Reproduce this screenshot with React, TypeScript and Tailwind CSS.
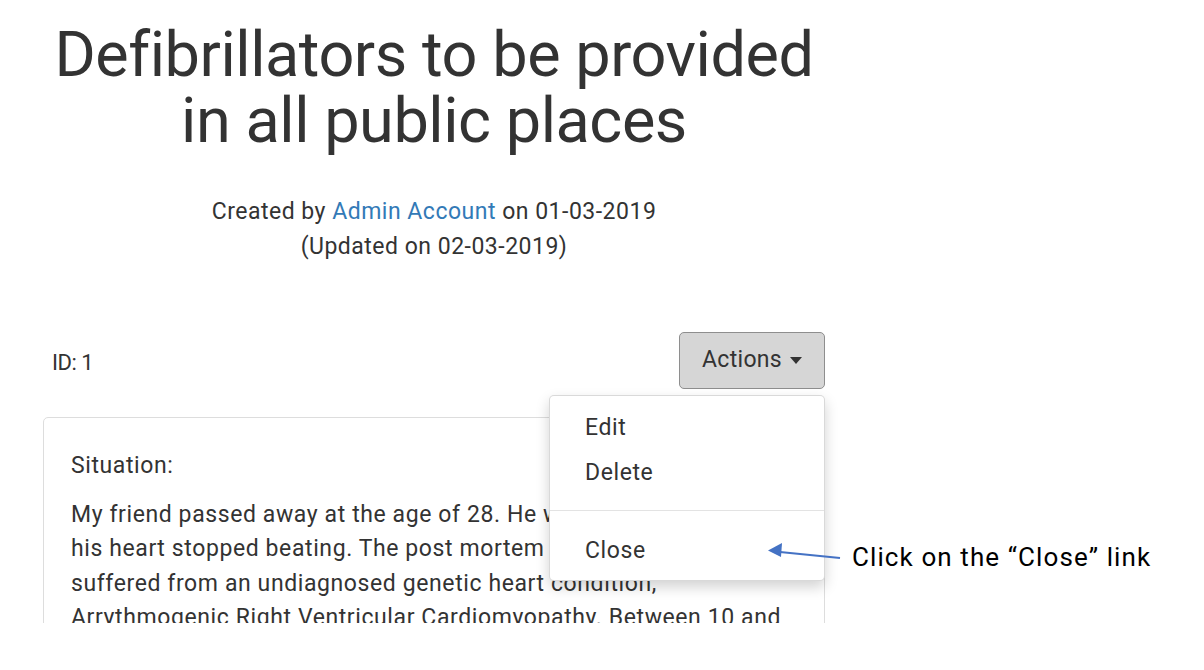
export default function App() {
  return (
    <div className="relative w-[1204px] h-[670px] bg-white text-[#333] font-['Roboto',sans-serif]">
      <div className="h-[623px] overflow-hidden">
        <div className="ml-[43px] w-[782px]">
          <h1 className="pt-[22px] text-center text-[63px] leading-[66px] font-normal tracking-[-0.45px]">
            Defibrillators to be provided
            <br />
            in all public places
          </h1>

          <div className="mt-[40px] text-center text-[23px] leading-[35px] tracking-[0.5px]">
            <div>
              Created by <a className="text-[#337ab7]">Admin Account</a> on 01-03-2019
            </div>
            <div>(Updated on 02-03-2019)</div>
          </div>

          <div className="relative mt-[68px] flex items-center justify-between">
            <div className="pl-[9px] pt-[4px] text-[22px] leading-[35px] tracking-[-0.5px]">ID: 1</div>
            <button className="flex h-[57px] w-[146px] items-center justify-center gap-[8px] rounded-[5px] border border-[#8e8e8e] bg-[#d6d6d6] text-[23px] tracking-[0.3px] text-[#333]">
              Actions
              <svg width="12" height="7" viewBox="0 0 12 7">
                <path d="M0 0h12L6 7z" fill="#333" />
              </svg>
            </button>

            <div className="absolute right-0 top-[63px] z-10 w-[276px] rounded-[5px] border border-black/15 bg-white pt-[9px] pb-[7px] shadow-[0_6px_14px_rgba(0,0,0,0.18)] text-[23px] tracking-[0.6px]">
              <div className="h-[45px] pl-[35px] leading-[45px]">Edit</div>
              <div className="h-[45px] pl-[35px] leading-[45px]">Delete</div>
              <div className="mt-[15px] mb-[17px] h-px bg-[#e3e3e3]" />
              <div className="h-[45px] pl-[35px] leading-[45px]">Close</div>
            </div>
          </div>

          <div className="mt-[28px] rounded-[5px] border border-[#ddd] px-[27px] pt-[31px] pb-6 text-[23px] leading-[34.5px] tracking-[0.6px]">
            <div>Situation:</div>
            <p className="mt-[14px] whitespace-nowrap">
              My friend passed away at the age of 28. He was out running when
              <br />
              his heart stopped beating. The post mortem revealed that he
              <br />
              suffered from an undiagnosed genetic heart condition,
              <br />
              Arrythmogenic Right Ventricular Cardiomyopathy. Between 10 and
              <br />
              20 young people die every week from undiagnosed heart conditions.
            </p>
          </div>
        </div>
      </div>

      <svg className="absolute left-[760px] top-[540px] z-20" width="90" height="26" viewBox="760 540 90 26">
        <line x1="780" y1="552" x2="840" y2="558" stroke="#4472c4" strokeWidth="2" />
        <path d="M768 550.5 L782 543 L781 557 Z" fill="#4472c4" />
      </svg>
      <div className="absolute left-[852px] top-[539px] z-20 text-[26px] leading-[36px] tracking-[1.1px] text-black">
        Click on the “Close” link
      </div>
    </div>
  )
}
